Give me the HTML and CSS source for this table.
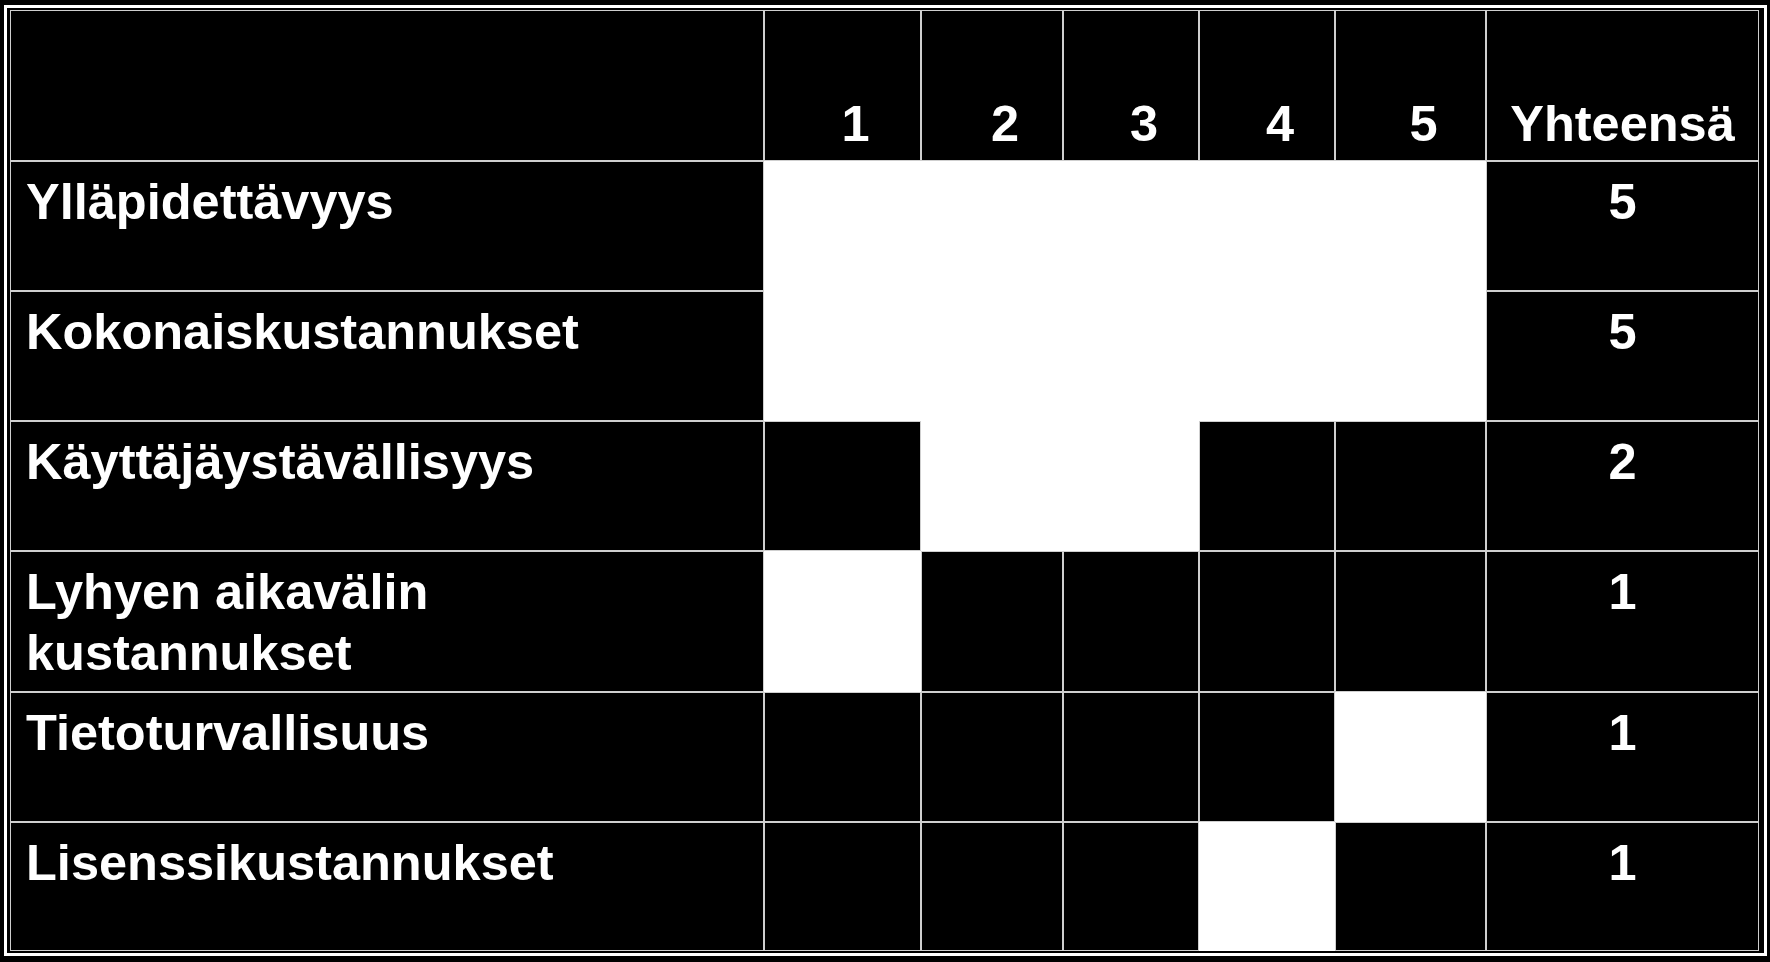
FILE: index.html
```html
<!DOCTYPE html>
<html>
<head>
<meta charset="utf-8">
<link rel="stylesheet" href="styles.css">
</head>
<body>
<div class="frame">
  <div class="grid">
    <div class="c"></div>
    <div class="c h">1</div>
    <div class="c h">2</div>
    <div class="c h">3</div>
    <div class="c h">4</div>
    <div class="c h">5</div>
    <div class="c ht">Yhteensä</div>

    <div class="c lbl">Ylläpidettävyys</div>
    <div class="c w"></div><div class="c w"></div><div class="c w"></div><div class="c w"></div><div class="c w"></div>
    <div class="c tot">5</div>

    <div class="c lbl">Kokonaiskustannukset</div>
    <div class="c w"></div><div class="c w"></div><div class="c w"></div><div class="c w"></div><div class="c w"></div>
    <div class="c tot">5</div>

    <div class="c lbl">Käyttäjäystävällisyys</div>
    <div class="c"></div><div class="c w"></div><div class="c w"></div><div class="c"></div><div class="c"></div>
    <div class="c tot">2</div>

    <div class="c lbl">Lyhyen aikavälin<br>kustannukset</div>
    <div class="c w"></div><div class="c"></div><div class="c"></div><div class="c"></div><div class="c"></div>
    <div class="c tot">1</div>

    <div class="c lbl">Tietoturvallisuus</div>
    <div class="c"></div><div class="c"></div><div class="c"></div><div class="c"></div><div class="c w"></div>
    <div class="c tot">1</div>

    <div class="c lbl">Lisenssikustannukset</div>
    <div class="c"></div><div class="c"></div><div class="c"></div><div class="c w"></div><div class="c"></div>
    <div class="c tot">1</div>
  </div>
</div>
</body>
</html>
```
FILE: styles.css
```css
html, body {
  margin: 0;
  padding: 0;
  background: #000;
}
body {
  font-family: "Liberation Sans", Arial, sans-serif;
  font-weight: bold;
  color: #fff;
  font-size: 50.5px;
  line-height: 61px;
}
.frame {
  margin: 5px 0 0 4px;
  width: 1753px;
  border: 3px solid #fff;
  padding: 2px 1px 2px 3px;
}
.grid {
  display: grid;
  grid-template-columns: 754px 157px 142px 136px 136px 151px 273px;
  grid-template-rows: 151px 130px 130px 130px 141px 130px 129px;
}
.c {
  box-sizing: border-box;
  border: 1px solid #cfcfcf;
  background: #000;
  overflow: visible;
  white-space: nowrap;
}
.c.w {
  background: #fff;
  border-color: #fff;
}
.h, .ht {
  display: flex;
  align-items: flex-end;
  justify-content: center;
  padding-bottom: 6px;
}
.h {
  padding-left: 26px;
}
.lbl {
  padding: 9px 0 0 15px;
}
.tot {
  text-align: center;
  padding-top: 9px;
}
```
